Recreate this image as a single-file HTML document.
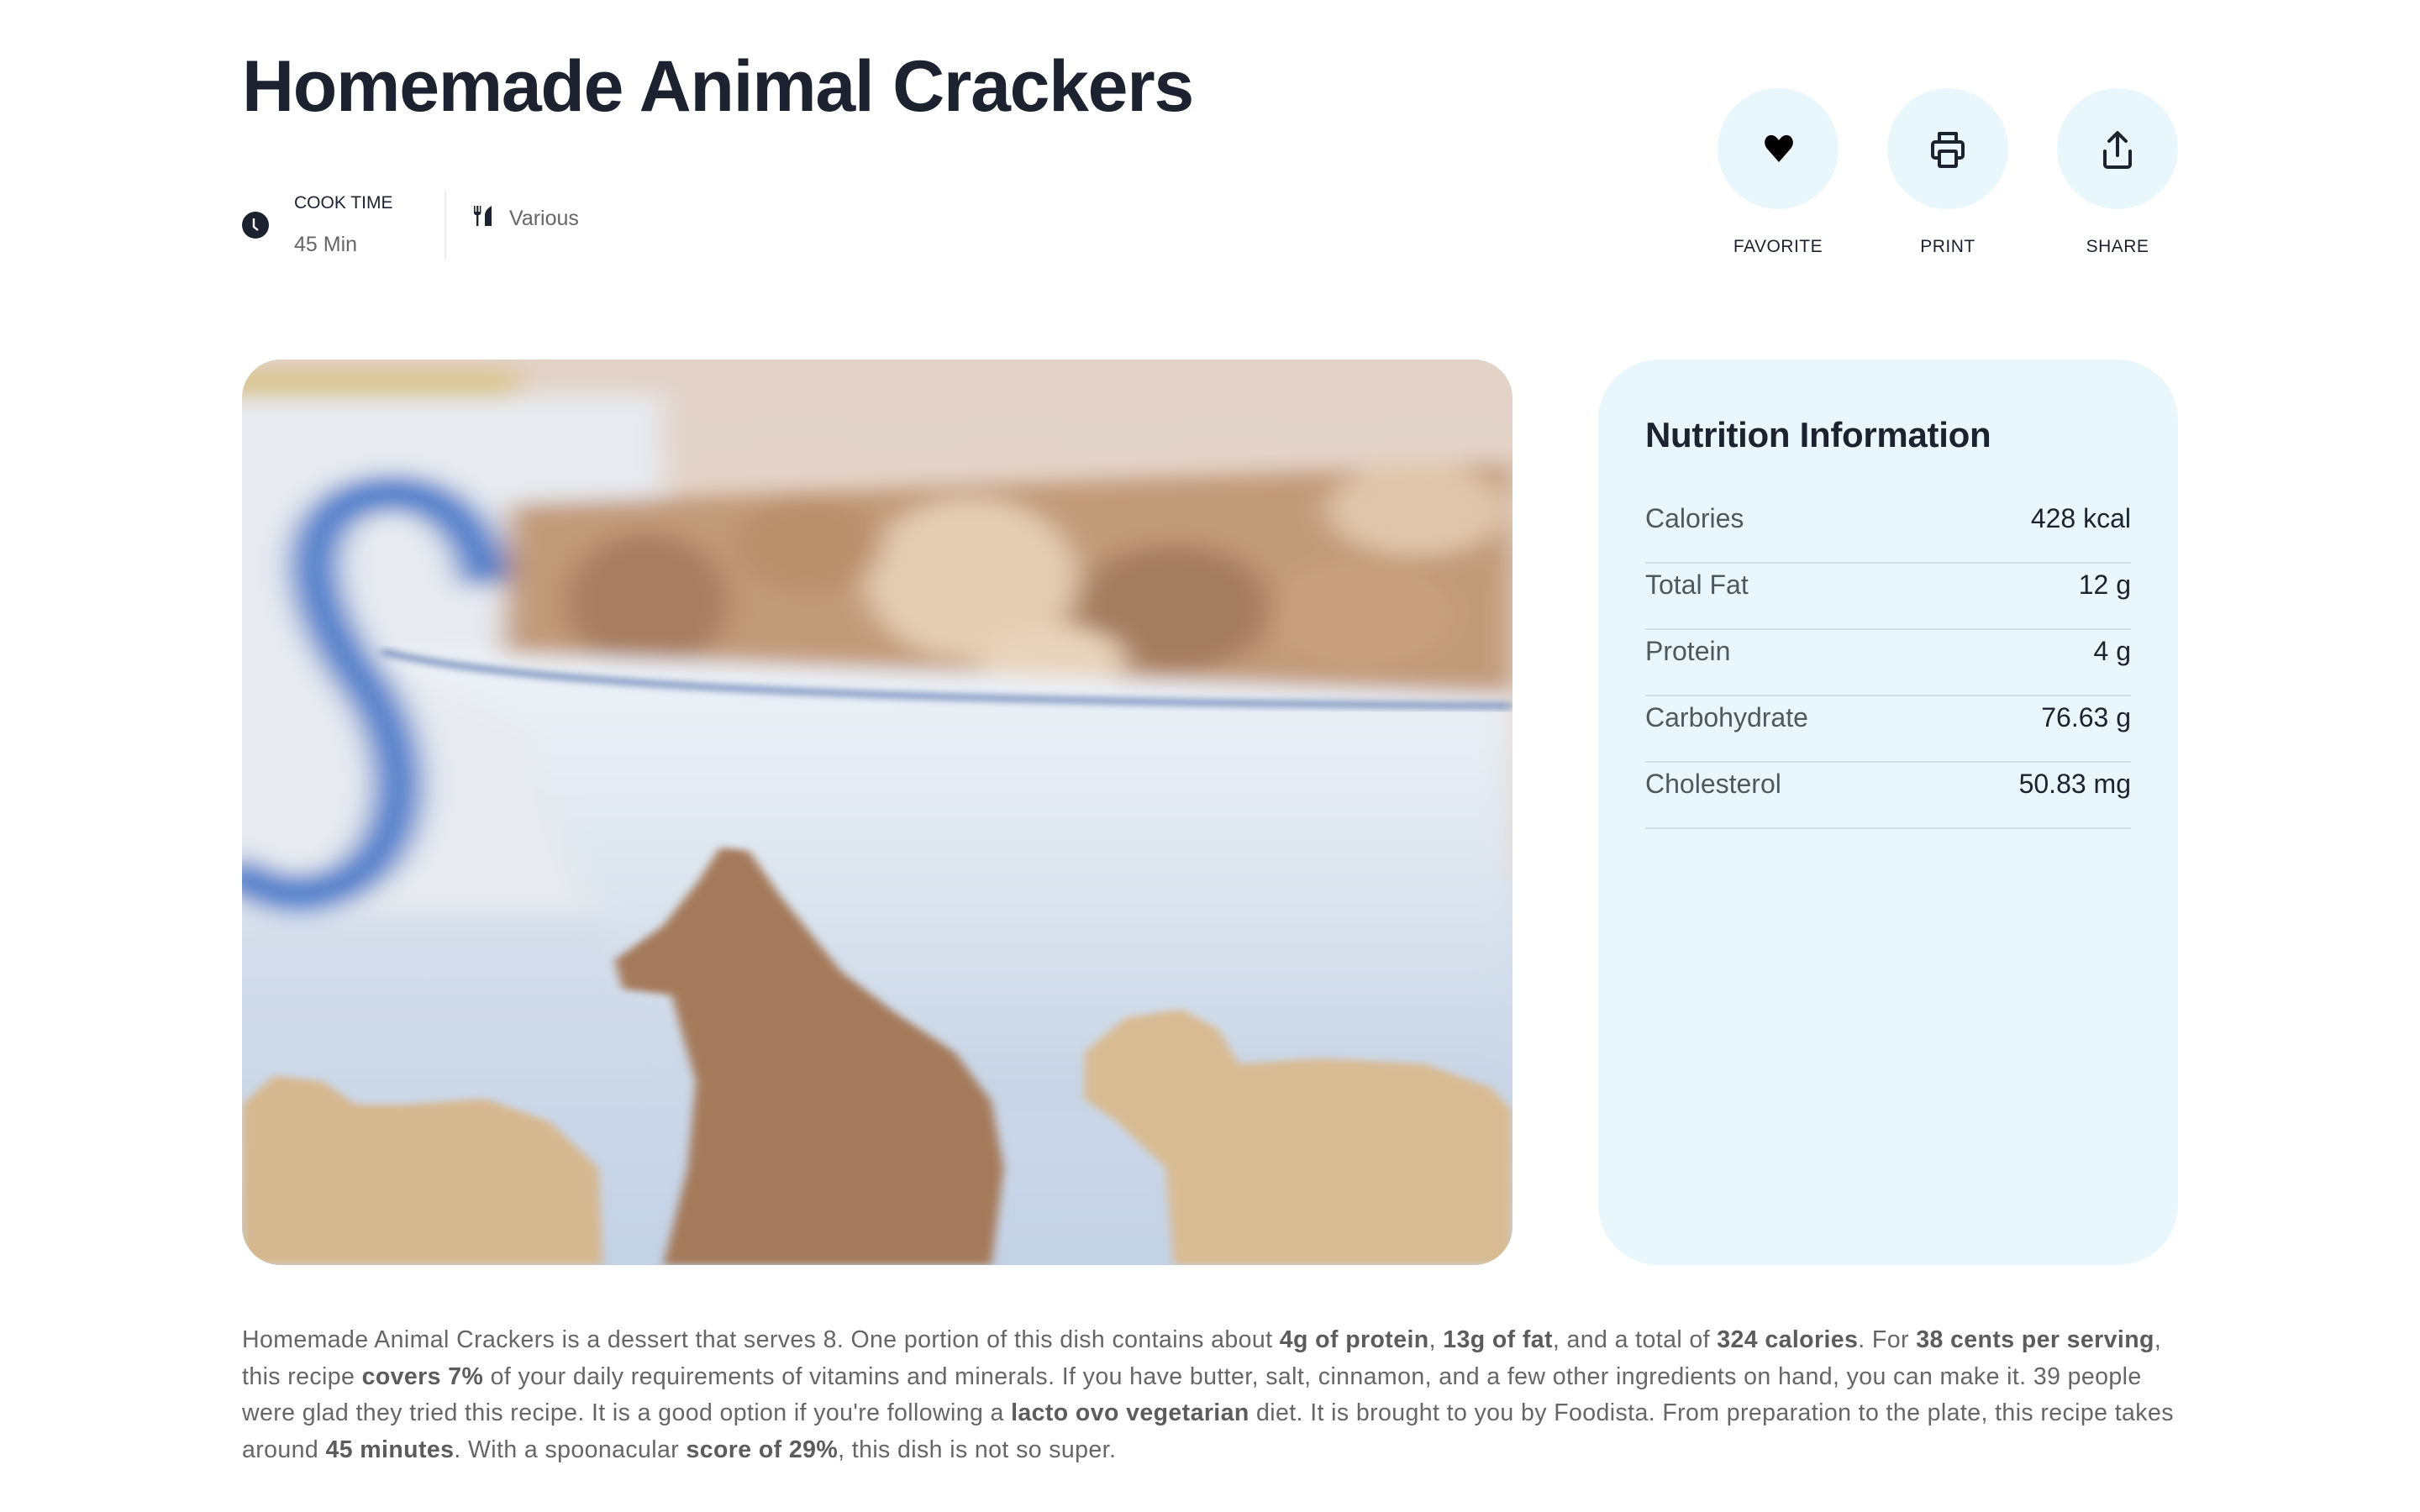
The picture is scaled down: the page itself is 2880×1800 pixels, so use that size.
<!DOCTYPE html>
<html><head><meta charset="utf-8"><style>
*{margin:0;padding:0;box-sizing:border-box}
body{width:2880px;height:1800px;background:#fff;font-family:"Liberation Sans",sans-serif;color:#1c2230;position:relative;overflow:hidden}
.abs{position:absolute}
h1{position:absolute;left:288px;top:53px;font-size:86px;font-weight:700;letter-spacing:-1.3px;line-height:100px;color:#1c2230;white-space:nowrap}
.btn{position:absolute;top:105px;width:144px;height:144px;border-radius:50%;background:#e9f7fc}
.lbl{position:absolute;top:282px;width:200px;text-align:center;font-size:21px;color:#1c2230;letter-spacing:.5px}
.card{position:absolute;left:1902px;top:428px;width:690px;height:1078px;background:#e9f7fc;border-radius:72px}
.row{position:absolute;left:56px;width:578px;height:79px;border-bottom:2px solid #d2dfe6;font-size:32px}
.row span{position:absolute;bottom:36px;line-height:1}
.row .l{left:0;color:#4f5760}.row .v{right:0;color:#1c2230}
p{position:absolute;left:288px;top:1574px;width:2400px;font-size:28.5px;line-height:43.5px;color:#666;letter-spacing:.4px;white-space:nowrap}
p b{font-weight:700;color:#5c5c5c}
</style></head><body>
<h1>Homemade Animal Crackers</h1>

<svg class="abs" style="left:288px;top:252px" width="32" height="32" viewBox="0 0 32 32"><circle cx="16" cy="16" r="16" fill="#1c2230"/><path d="M14 8v10l5 4" stroke="#fff" stroke-width="2.4" fill="none"/></svg>
<div class="abs" style="left:350px;top:230px;font-size:21px;color:#1c2230">COOK TIME</div>
<div class="abs" style="left:350px;top:277px;font-size:25px;color:#666">45 Min</div>
<div class="abs" style="left:529px;top:226px;width:2px;height:84px;background:#eee"></div>
<svg class="abs" style="left:563px;top:245px" width="24" height="24" viewBox="0 0 24 24"><path d="M1 0v8q0 3 3 3v13h2.4V11q3 0 3-3V0H8v7H6.4V0H4.2v7H2.6V0z M14 24V11q0-6 8-11v24z" fill="#1c2230"/></svg>
<div class="abs" style="left:606px;top:246px;font-size:25px;color:#666">Various</div>

<div class="btn" style="left:2044px"></div>
<div class="btn" style="left:2246px"></div>
<div class="btn" style="left:2448px"></div>
<svg class="abs" style="left:2099px;top:160px" width="36" height="34" viewBox="0 0 36 34"><path d="M18 33L4 17C-3 9 4-3 13 2c3 2 5 5 5 5s2-3 5-5c9-5 16 7 9 15z" fill="#000"/></svg>
<svg class="abs" style="left:2298px;top:156px" width="40" height="44" viewBox="0 0 40 44"><g fill="none" stroke="#1c2230" stroke-width="4" stroke-linejoin="round"><path d="M10 13V3h20v10"/><path d="M10 32H5a3 3 0 0 1-3-3V16a3 3 0 0 1 3-3h30a3 3 0 0 1 3 3v13a3 3 0 0 1-3 3h-5"/><rect x="10" y="24" width="20" height="18" rx="1"/></g></svg>
<svg class="abs" style="left:2502px;top:156px" width="36" height="46" viewBox="0 0 36 46"><g fill="none" stroke="#1c2230" stroke-width="4" stroke-linecap="round" stroke-linejoin="round"><path d="M18 3v26M8 12l10-10 10 10"/><path d="M3 24v16a3 3 0 0 0 3 3h24a3 3 0 0 0 3-3V24"/></g></svg>
<div class="lbl" style="left:2016px">FAVORITE</div>
<div class="lbl" style="left:2218px">PRINT</div>
<div class="lbl" style="left:2420px">SHARE</div>

<div class="abs" style="left:288px;top:428px;width:1512px;height:1078px;border-radius:46px;overflow:hidden">
<svg width="1512" height="1078" viewBox="0 0 1568 1568" preserveAspectRatio="none">
<defs>
<filter id="b1" x="-20%" y="-20%" width="140%" height="140%"><feGaussianBlur stdDeviation="18"/></filter>
<filter id="b2"><feGaussianBlur stdDeviation="6"/></filter>
<linearGradient id="bg" x1="0" y1="0" x2="0" y2="1"><stop offset="0" stop-color="#e2d2c8"/><stop offset="1" stop-color="#e8dcd4"/></linearGradient>
<linearGradient id="bowl" x1="0" y1="0" x2="0" y2="1"><stop offset="0" stop-color="#eef2f7"/><stop offset=".5" stop-color="#dde6f0"/><stop offset="1" stop-color="#c6d3e4"/></linearGradient>
<linearGradient id="tab" x1="0" y1="0" x2="0" y2="1"><stop offset="0" stop-color="#d6dfeb"/><stop offset="1" stop-color="#c4d2e6"/></linearGradient>
</defs>
<rect width="1568" height="1568" fill="url(#bg)"/>
<rect x="0" y="900" width="1568" height="668" fill="url(#tab)"/>
<g filter="url(#b1)">
<rect x="-40" y="60" width="560" height="900" fill="#e7eaef"/>
<rect x="-40" y="20" width="380" height="45" fill="#d9c489"/>
<path d="M300 390C290 250 200 200 130 250C60 310 90 450 150 560C220 700 200 860 120 910C70 940 20 920 -20 880" stroke="#4f7fcb" stroke-width="62" fill="none"/>
<path d="M330 250L1568 180L1568 600L320 560z" fill="#c19a79"/>
<ellipse cx="900" cy="380" rx="130" ry="140" fill="#e4cdb2"/>
<ellipse cx="1450" cy="260" rx="110" ry="80" fill="#e0c6aa"/>
<ellipse cx="500" cy="420" rx="100" ry="120" fill="#a77e60"/>
<ellipse cx="1150" cy="430" rx="120" ry="110" fill="#a47c5e"/>
<ellipse cx="700" cy="320" rx="90" ry="80" fill="#b98f6c"/>
<ellipse cx="1000" cy="520" rx="90" ry="60" fill="#e8d3bb"/>
<ellipse cx="1380" cy="440" rx="110" ry="90" fill="#c8a07d"/>
<path d="M170 500L1568 580L1568 1300L600 1300Q420 1000 350 640L170 520z" fill="url(#bowl)"/>
</g>
<path d="M172 505Q400 590 1568 600" stroke="#6f88b8" stroke-width="10" fill="none" filter="url(#b2)"/>
<g filter="url(#b2)">
<path d="M460 1040L520 980L565 900L590 845L625 850L665 930L705 1000L740 1060L805 1130L880 1200L925 1285L940 1400L925 1568L520 1568L550 1400L560 1250L530 1100L470 1090z" fill="#a47a5c"/>
<path d="M0 1290L40 1240L100 1250L140 1290L200 1290L300 1280L380 1320L440 1400L445 1568L0 1568z" fill="#d6b890"/>
<path d="M1040 1200L1090 1140L1160 1125L1205 1160L1230 1220L1330 1210L1460 1220L1540 1260L1568 1300L1568 1568L1150 1568L1140 1400L1080 1320L1040 1280z" fill="#d8bb93"/>
</g>
</svg>
</div>

<div class="card">
<div class="abs" style="left:56px;top:66px;font-size:42px;font-weight:700;color:#1c2230;letter-spacing:-.3px">Nutrition Information</div>
<div class="row" style="top:164px"><span class="l">Calories</span><span class="v">428 kcal</span></div>
<div class="row" style="top:243px"><span class="l">Total Fat</span><span class="v">12 g</span></div>
<div class="row" style="top:322px"><span class="l">Protein</span><span class="v">4 g</span></div>
<div class="row" style="top:401px"><span class="l">Carbohydrate</span><span class="v">76.63 g</span></div>
<div class="row" style="top:480px"><span class="l">Cholesterol</span><span class="v">50.83 mg</span></div>
</div>

<p>Homemade Animal Crackers is a dessert that serves 8. One portion of this dish contains about <b>4g of protein</b>, <b>13g of fat</b>, and a total of <b>324 calories</b>. For <b>38 cents per serving</b>,<br>this recipe <b>covers 7%</b> of your daily requirements of vitamins and minerals. If you have butter, salt, cinnamon, and a few other ingredients on hand, you can make it. 39 people<br>were glad they tried this recipe. It is a good option if you're following a <b>lacto ovo vegetarian</b> diet. It is brought to you by Foodista. From preparation to the plate, this recipe takes<br>around <b>45 minutes</b>. With a spoonacular <b>score of 29%</b>, this dish is not so super.</p>
</body></html>
